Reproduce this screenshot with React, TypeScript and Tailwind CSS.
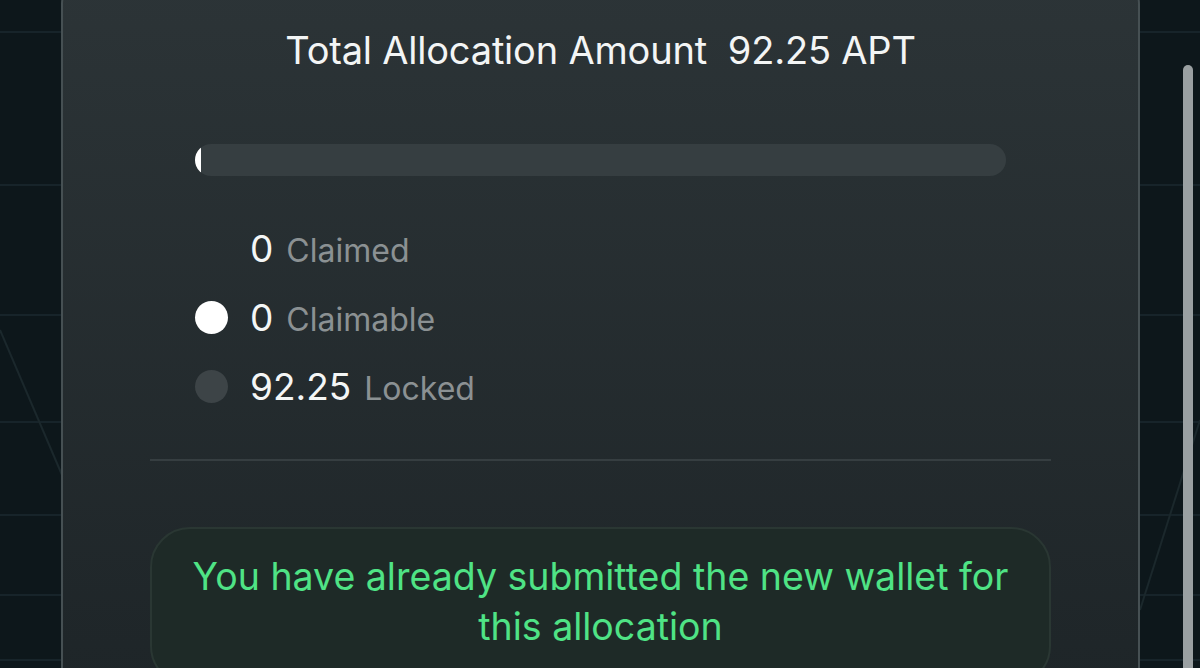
import React from "react";

type Row = { value: string; label: string; dot?: string };

const rows: Row[] = [
  { value: "0", label: "Claimed" },
  { value: "0", label: "Claimable", dot: "bg-white" },
  { value: "92.25", label: "Locked", dot: "bg-[#3d4447]" },
];

// faint perspective grid behind the card
const GridBackdrop = () => (
  <svg className="absolute inset-0 h-full w-full" viewBox="0 0 1200 668" preserveAspectRatio="none">
    {[32, 185, 315, 422, 515, 595, 660].map((y) => (
      <line key={y} x1="0" y1={y} x2="1200" y2={y} stroke="#17242a" strokeWidth="2" />
    ))}
    <line x1="0" y1="330" x2="62" y2="475" stroke="#1b282c" strokeWidth="2" />
    <line x1="1140" y1="610" x2="1200" y2="420" stroke="#1b282c" strokeWidth="2" />
  </svg>
);

export default function App() {
  return (
    <div
      className="relative h-[668px] w-[1200px] overflow-hidden bg-[#0d171b]"
      style={{ fontFamily: "Inter, 'Noto Sans', sans-serif" }}
    >
      <GridBackdrop />
      <div className="relative flex h-full">
        <div className="w-[61px] shrink-0" />

        <main className="-mt-6 h-[720px] w-[1079px] shrink-0 rounded-[28px] border-2 border-[#465053] bg-gradient-to-b from-[#2c3437] to-[#1e2528] px-[87px] pt-[50px]">
          <h1 className="text-center text-[38px] leading-[44px] font-normal tracking-[-0.2px] text-[#f3f5f5]">
            Total Allocation Amount&nbsp;&nbsp;92.25 APT
          </h1>

          <div className="mt-[72px] px-[45px]">
            <div className="h-8 w-full overflow-hidden rounded-full bg-[#363e41]">
              <div className="h-full w-[6px] rounded-l-full bg-white" />
            </div>

            <ul className="mt-[38px] flex flex-col">
              {rows.map((r) => (
                <li key={r.label} className="flex h-[69px] items-center gap-[22px]">
                  <span className={`h-[33px] w-[33px] shrink-0 rounded-full ${r.dot ?? "bg-transparent"}`} />
                  <span className="text-[37px] leading-none text-[#f4f6f6]">
                    {r.value}
                    <span className="ml-[13px] text-[32px] text-[#8b9193]">{r.label}</span>
                  </span>
                </li>
              ))}
            </ul>
          </div>

          <div className="mt-[38px] h-[2px] bg-[#363e41]" />

          <section className="mt-[66px] rounded-[40px] border-2 border-[#2a3733] bg-[#1e2a27] px-6 pt-[23px] pb-8">
            <p className="text-center text-[37.5px] leading-[50px] text-[#4fe385]">
              You have already submitted the new wallet for
              <br />
              this allocation
            </p>
          </section>
        </main>

        <div className="flex-1 pl-[43px] pt-[65px]">
          <div className="h-[640px] w-[10px] rounded-full bg-[#9aa0a2]" />
        </div>
      </div>
    </div>
  );
}
